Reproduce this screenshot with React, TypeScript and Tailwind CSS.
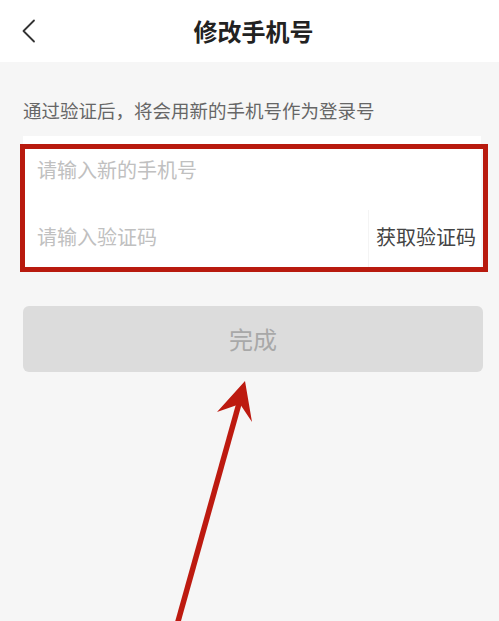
import React from "react";

const FONT = { fontFamily: '"Noto Sans CJK SC", "Noto Sans", sans-serif' };

function BackIcon() {
  return (
    <svg width="16" height="24" viewBox="0 0 16 24" fill="none">
      <path d="M13 1.5 L2.5 12 L13 22.5" stroke="#333" strokeWidth="1.8" strokeLinecap="round" strokeLinejoin="round" />
    </svg>
  );
}

function Arrow() {
  return (
    <svg className="pointer-events-none absolute left-0 top-0" width="499" height="621" viewBox="0 0 499 621">
      <line x1="177" y1="625" x2="240" y2="400" stroke="#bd1a10" strokeWidth="5.5" />
      <polygon points="245,381 252,422 240,404 217,412" fill="#bd1a10" />
    </svg>
  );
}

export default function App() {
  return (
    <div className="relative flex h-[621px] w-[499px] flex-col overflow-hidden bg-[#f6f6f6]" style={FONT}>
      <header className="flex h-[62px] items-center justify-between bg-white px-[21px]">
        <button className="flex w-[40px] items-center">
          <BackIcon />
        </button>
        <h1 className="text-[24px] font-bold text-[#222] leading-none">修改手机号</h1>
        <div className="w-[32px]" />
      </header>

      <main className="flex flex-col pl-[23px] pr-[16px] pt-[35px]">
        <p className="text-[18.5px] leading-[26px] text-[#666]">通过验证后，将会用新的手机号作为登录号</p>

        <div className="relative mt-[13px] mr-[2px] bg-white">
          <div className="flex h-[67px] items-center pl-[14px] text-[20px] text-[#c0c0c0]">
            请输入新的手机号
          </div>
          <div className="flex h-[67px] items-center pl-[14px]">
            <span className="flex-1 text-[20px] text-[#c0c0c0]">请输入验证码</span>
            <div className="flex h-[60px] items-center self-end border-l border-[#f4f4f4] pl-[7px] pr-[5px] pb-[7px]">
              <span className="text-[20px] text-[#444]">获取验证码</span>
            </div>
          </div>
          <div className="pointer-events-none absolute -left-[3px] -right-[7px] top-[8px] -bottom-[2px] border-[5px] border-[#b81a0e]" />
        </div>

        <button className="mt-[36px] flex h-[66px] items-center justify-center rounded-[6px] bg-[#dcdcdc]">
          <span className="text-[24px] text-[#a8a8a8]">完成</span>
        </button>
      </main>

      <Arrow />
    </div>
  );
}
